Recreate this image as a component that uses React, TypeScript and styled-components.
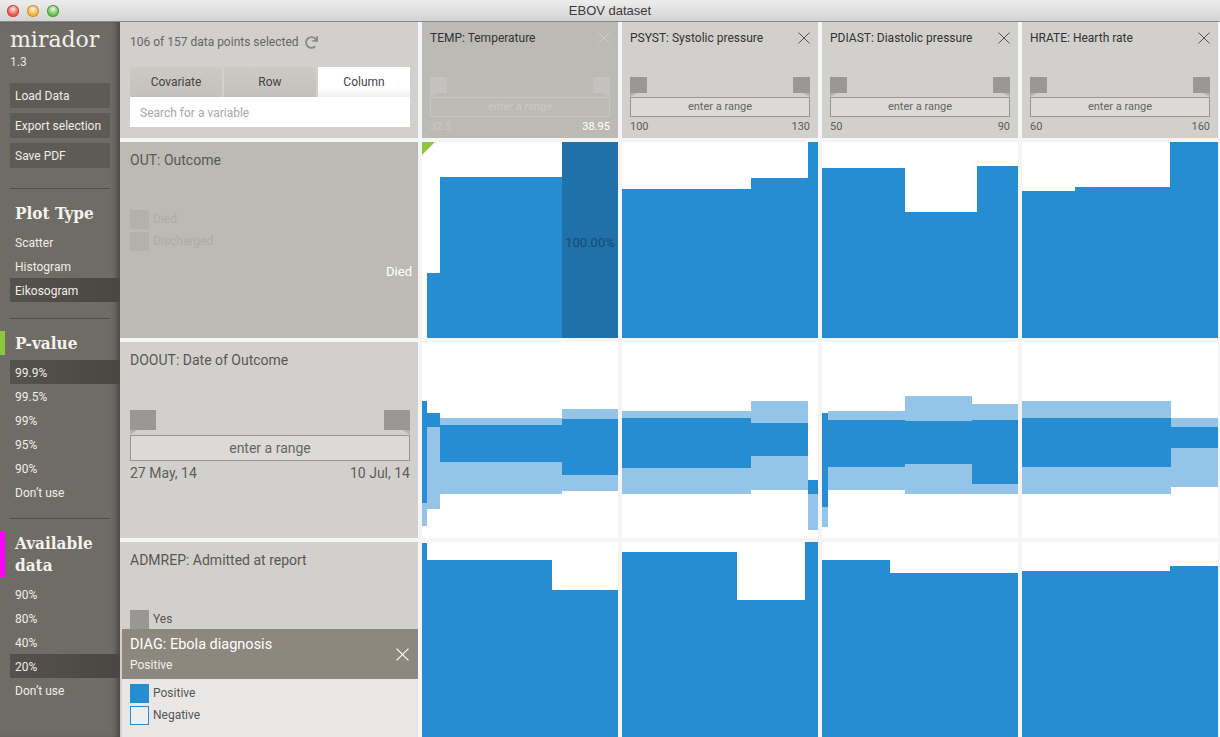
import React from 'react';
import styled, { createGlobalStyle } from 'styled-components';
import { FaRedo } from 'react-icons/fa';

const GlobalStyle = createGlobalStyle`
  html, body {
    margin: 0;
    padding: 0;
    overflow: hidden;
    background: #f5f5f5;
  }
  body {
    font-family: Roboto, "Liberation Sans", sans-serif;
  }
  * {
    box-sizing: border-box;
  }
`

const BLUE = '#278dd3'
const LIGHT = '#94c5e9'
const DARK = '#2071aa'

const Window = styled.div`
  width: 1220px;
  height: 737px;
  display: flex;
  flex-direction: column;
  overflow: hidden;
`

const TitleBar = styled.div`
  height: 22px;
  flex: none;
  display: grid;
  grid-template-columns: 1fr auto 1fr;
  align-items: center;
  background: linear-gradient(#ededed, #d3d3d3);
  border-bottom: 1px solid #8a8a8a;
  font-family: "Liberation Sans", sans-serif;
  font-size: 13px;
  color: #3a3a3a;
`

const Lights = styled.div`
  display: flex;
  gap: 8px;
  padding-left: 7px;
`

const Light = styled.span<{ $color: string; $edge: string }>`
  width: 12px;
  height: 12px;
  border-radius: 50%;
  background: radial-gradient(circle at 50% 35%, #fff8 0, ${p => p.$color} 55%);
  box-shadow: inset 0 0 0 1px ${p => p.$edge};
`

const Body = styled.div`
  flex: 1;
  display: flex;
  min-height: 0;
`

const Sidebar = styled.nav`
  width: 120px;
  flex: none;
  background: #6f6c66;
  color: #eeece8;
  padding-top: 3px;
  box-shadow: inset -6px 0 6px -3px rgba(0, 0, 0, 0.35);
`

const Logo = styled.div`
  font-family: "DejaVu Serif", "Liberation Serif", serif;
  font-size: 22px;
  line-height: 30px;
  padding-left: 10px;
  color: #f2f0ec;
`

const Version = styled.div`
  font-size: 12px;
  line-height: 14px;
  padding-left: 10px;
  color: #e6e4e0;
`

const ButtonGroup = styled.div`
  margin-top: 14px;
  display: flex;
  flex-direction: column;
  gap: 5px;
`

const MenuButton = styled.div`
  width: 100px;
  height: 25px;
  margin-left: 10px;
  padding-left: 5px;
  background: #5e5b56;
  font-size: 12px;
  line-height: 26px;
`

const Separator = styled.hr<{ $top: number; $bottom: number }>`
  width: 100px;
  margin: ${p => p.$top}px 0 ${p => p.$bottom}px 10px;
  border: none;
  border-top: 1px solid #524f4b;
  height: 0;
`

const Heading = styled.div<{ $marker?: string }>`
  font-family: "DejaVu Serif Condensed", "DejaVu Serif", "Liberation Serif", serif;
  font-weight: bold;
  font-size: 17px;
  line-height: 22px;
  padding: 1px 0 1px 10px;
  border-left: 5px solid ${p => p.$marker || 'transparent'};
  color: #f4f2ee;
`

const MenuList = styled.div<{ $top: number }>`
  margin-top: ${p => p.$top}px;
`

const MenuItem = styled.div<{ $selected?: boolean }>`
  height: 24px;
  line-height: 27px;
  margin-left: 10px;
  padding-left: 5px;
  font-size: 12px;
  overflow: hidden;
  background: ${p => (p.$selected ? 'linear-gradient(90deg, #55524d, #4a4743)' : 'transparent')};
`

const Main = styled.main`
  flex: 1;
  display: grid;
  grid-template-columns: 298px repeat(4, 196px);
  grid-template-rows: 116px repeat(3, 196px);
  gap: 4px;
  background: #f5f5f5;
  overflow: hidden;
`

const ControlPanel = styled.section`
  background: #d2d0cc;
  padding: 12px 8px 0 10px;
`

const Status = styled.div`
  display: flex;
  align-items: center;
  gap: 6px;
  font-size: 12px;
  line-height: 16px;
  color: #666;
  svg {
    color: #8a8a8a;
  }
`

const Tabs = styled.div`
  display: flex;
  gap: 2px;
  margin-top: 17px;
`

const Tab = styled.div<{ $active?: boolean }>`
  flex: 1;
  height: 30px;
  line-height: 30px;
  text-align: center;
  font-size: 12px;
  color: #444;
  background: ${p => (p.$active ? 'linear-gradient(#fff 70%, #f0f0f0)' : 'linear-gradient(#cdcac5, #c4c1bc)')};
`

const Search = styled.div`
  height: 30px;
  line-height: 32px;
  padding-left: 10px;
  background: #fff;
  font-size: 12px;
  color: #a8a8a8;
`

const ColHead = styled.section<{ $active?: boolean }>`
  background: ${p => (p.$active ? '#bcbab5' : '#d2d0cc')};
  padding: 8px 8px 0 8px;
`

const HeadRow = styled.div`
  display: flex;
  justify-content: space-between;
  align-items: center;
  height: 16px;
`

const ColTitle = styled.div`
  font-size: 12px;
  color: #333;
`

const RowHead = styled.section<{ $active?: boolean }>`
  position: relative;
  background: ${p => (p.$active ? '#bcbab5' : '#d2d0cc')};
  padding: 10px 6px 0 10px;
`

const RowTitle = styled.div`
  font-size: 14px;
  line-height: 16px;
  color: #5a5854;
`

const Legend = styled.div<{ $top: number }>`
  margin-top: ${p => p.$top}px;
  display: flex;
  flex-direction: column;
  gap: 3px;
`

const LegendItem = styled.div<{ $faded?: boolean }>`
  display: flex;
  align-items: center;
  gap: 4px;
  height: 19px;
  font-size: 12px;
  line-height: 21px;
  color: ${p => (p.$faded ? '#aeaca8' : '#555')};
`

const Swatch = styled.span<{ $fill: string; $border?: string }>`
  width: 19px;
  height: 19px;
  background: ${p => p.$fill};
  border: ${p => (p.$border ? `1px solid ${p.$border}` : 'none')};
`

const BarLabel = styled.div`
  margin-top: 13px;
  text-align: right;
  font-size: 13px;
  line-height: 16px;
  color: #fff;
`

const SliderWrap = styled.div<{ $top: number; $big?: boolean }>`
  margin-top: ${p => p.$top}px;
  padding-right: ${p => (p.$big ? 2 : 0)}px;
`

const Handles = styled.div`
  display: flex;
  justify-content: space-between;
`

const Handle = styled.span<{ $big?: boolean; $side: 'left' | 'right'; $faded?: boolean }>`
  position: relative;
  width: ${p => (p.$big ? 26 : 17)}px;
  height: ${p => (p.$big ? 20 : 16)}px;
  margin-bottom: ${p => (p.$big ? 5 : 4)}px;
  background: ${p => (p.$faded ? '#c4c2be' : '#9a9894')};
  &::after {
    content: '';
    position: absolute;
    top: 100%;
    ${p => p.$side}: 0;
    border-top: ${p => (p.$big ? 5 : 4)}px solid ${p => (p.$faded ? '#c4c2be' : '#b4b2ae')};
    ${p => (p.$side === 'left' ? 'border-right' : 'border-left')}: 7px solid transparent;
  }
`

const RangeBox = styled.div<{ $big?: boolean; $faded?: boolean }>`
  height: ${p => (p.$big ? 26 : 20)}px;
  line-height: ${p => (p.$big ? 24 : 18)}px;
  text-align: center;
  font-size: ${p => (p.$big ? 14 : 11)}px;
  color: ${p => (p.$faded ? '#cbc9c5' : '#666')};
  background: ${p => (p.$faded ? 'transparent' : '#dcdad6')};
  border: 1px solid ${p => (p.$faded ? '#c8c6c2' : '#999794')};
`

const RangeLabels = styled.div<{ $big?: boolean }>`
  display: flex;
  justify-content: space-between;
  margin-top: ${p => (p.$big ? 3 : 2)}px;
  font-size: ${p => (p.$big ? 14 : 11)}px;
  line-height: ${p => (p.$big ? 18 : 16)}px;
  color: #5f5d59;
`

const RangeValue = styled.span<{ $tone?: 'faded' | 'light' }>`
  color: ${p => (p.$tone === 'faded' ? '#c9c7c3' : p.$tone === 'light' ? '#fff' : 'inherit')};
`

const FilterPopup = styled.div`
  position: absolute;
  top: 87px;
  left: 2px;
  right: 0;
  bottom: 0;
  background: #e8e7e5;
`

const FilterHead = styled.div`
  height: 50px;
  background: #8e877d;
  color: #fff;
  padding: 7px 9px 0 8px;
  display: flex;
  justify-content: space-between;
  align-items: flex-start;
  svg {
    align-self: center;
    margin-top: -7px;
  }
`

const FilterTitle = styled.div`
  font-size: 14.5px;
  line-height: 18px;
`

const FilterSub = styled.div`
  font-size: 12px;
  line-height: 16px;
  margin-top: 3px;
  color: #f3f1ee;
`

const FilterBody = styled.div`
  padding: 5px 8px 0 8px;
  display: flex;
  flex-direction: column;
  gap: 3px;
`

const PlotCell = styled.div`
  background: #fff;
  svg {
    display: block;
  }
`

const PercentText = styled.text`
  font-family: Roboto, sans-serif;
  font-size: 13px;
  fill: #1a4a6e;
`

type Rect = [number, number, number, number, string?]

function Close({ color, size = 12 }: { color: string; size?: number }) {
  return (
    <svg width={size} height={size} viewBox="0 0 12 12">
      <path d="M0.5 0.5 L11.5 11.5 M11.5 0.5 L0.5 11.5" stroke={color} strokeWidth="1" />
    </svg>
  )
}

function Slider({ big, faded, lo, hi, top, hiTone }: { big?: boolean; faded?: boolean; lo: string; hi: string; top: number; hiTone?: 'light' }) {
  return (
    <SliderWrap $top={top} $big={big}>
      <Handles>
        <Handle $big={big} $side="left" $faded={faded} />
        <Handle $big={big} $side="right" $faded={faded} />
      </Handles>
      <RangeBox $big={big} $faded={faded}>enter a range</RangeBox>
      <RangeLabels $big={big}>
        <RangeValue $tone={faded ? 'faded' : undefined}>{lo}</RangeValue>
        <RangeValue $tone={hiTone}>{hi}</RangeValue>
      </RangeLabels>
    </SliderWrap>
  )
}

function Plot({ rects, corner, percent }: { rects: Rect[]; corner?: boolean; percent?: boolean }) {
  return (
    <PlotCell>
      <svg width="196" height="196" viewBox="0 0 196 196">
        {rects.map(([x, y, w, h, fill], i) => (
          <rect key={i} x={x} y={y} width={w} height={h} fill={fill || BLUE} />
        ))}
        {percent && <PercentText x="168" y="105" textAnchor="middle">100.00%</PercentText>}
        {corner && <polygon points="0,0 13,0 0,13" fill="#8dc63f" />}
      </svg>
    </PlotCell>
  )
}

const columns = [
  { title: 'TEMP: Temperature', lo: '32.2', hi: '38.95', active: true },
  { title: 'PSYST: Systolic pressure', lo: '100', hi: '130' },
  { title: 'PDIAST: Diastolic pressure', lo: '50', hi: '90' },
  { title: 'HRATE: Hearth rate', lo: '60', hi: '160' },
]

const outcomePlots: Rect[][] = [
  [[5, 131, 13, 65], [18, 35, 122, 161], [140, 0, 56, 196, DARK]],
  [[0, 47, 129, 149], [129, 36, 57, 160], [186, 0, 10, 196]],
  [[0, 26, 83, 170], [83, 70, 72, 126], [155, 24, 41, 172]],
  [[0, 49, 53, 147], [53, 45, 95, 151], [148, 0, 48, 196]],
]

const datePlots: Rect[][] = [
  [
    [0, 59, 5, 102], [0, 161, 5, 23, LIGHT],
    [5, 71, 13, 14], [5, 85, 13, 82, LIGHT],
    [18, 76, 122, 7, LIGHT], [18, 83, 122, 37], [18, 120, 122, 32, LIGHT],
    [140, 67, 56, 10, LIGHT], [140, 77, 56, 56], [140, 133, 56, 16, LIGHT],
  ],
  [
    [0, 69, 129, 7, LIGHT], [0, 76, 129, 50], [0, 126, 129, 26, LIGHT],
    [129, 59, 57, 22, LIGHT], [129, 81, 57, 33], [129, 114, 57, 34, LIGHT],
    [186, 138, 10, 14], [186, 152, 10, 36, LIGHT],
  ],
  [
    [0, 71, 6, 94], [0, 165, 6, 20, LIGHT],
    [6, 69, 77, 9, LIGHT], [6, 78, 77, 47], [6, 125, 77, 23, LIGHT],
    [83, 54, 67, 25, LIGHT], [83, 79, 67, 43], [83, 122, 67, 30, LIGHT],
    [150, 62, 46, 16, LIGHT], [150, 78, 46, 64], [150, 142, 46, 10, LIGHT],
  ],
  [
    [0, 59, 149, 17, LIGHT], [0, 76, 149, 49], [0, 125, 149, 27, LIGHT],
    [149, 76, 47, 9, LIGHT], [149, 85, 47, 21], [149, 106, 47, 39, LIGHT],
  ],
]

const admittedPlots: Rect[][] = [
  [[0, 1, 5, 195], [5, 18, 125, 178], [130, 48, 66, 148]],
  [[0, 10, 115, 186], [115, 58, 68, 138], [183, 0, 13, 196]],
  [[0, 18, 68, 178], [68, 31, 128, 165]],
  [[0, 29, 148, 167], [148, 24, 48, 172]],
]

function App() {
  return (
    <>
      <GlobalStyle />
      <Window>
        <TitleBar>
          <Lights>
            <Light $color="#f25a52" $edge="#c9443d" />
            <Light $color="#f6b63c" $edge="#cf8f26" />
            <Light $color="#6cc553" $edge="#4a9a37" />
          </Lights>
          <span>EBOV dataset</span>
          <span />
        </TitleBar>
        <Body>
          <Sidebar>
            <Logo>mirador</Logo>
            <Version>1.3</Version>
            <ButtonGroup>
              <MenuButton>Load Data</MenuButton>
              <MenuButton>Export selection</MenuButton>
              <MenuButton>Save PDF</MenuButton>
            </ButtonGroup>
            <Separator $top={20} $bottom={12} />
            <Heading>Plot Type</Heading>
            <MenuList $top={5}>
              <MenuItem>Scatter</MenuItem>
              <MenuItem>Histogram</MenuItem>
              <MenuItem $selected>Eikosogram</MenuItem>
            </MenuList>
            <Separator $top={16} $bottom={12} />
            <Heading $marker="#8dc63f">P-value</Heading>
            <MenuList $top={5}>
              <MenuItem $selected>99.9%</MenuItem>
              <MenuItem>99.5%</MenuItem>
              <MenuItem>99%</MenuItem>
              <MenuItem>95%</MenuItem>
              <MenuItem>90%</MenuItem>
              <MenuItem>Don’t use</MenuItem>
            </MenuList>
            <Separator $top={14} $bottom={12} />
            <Heading $marker="#ff00ff">Available<br />data</Heading>
            <MenuList $top={5}>
              <MenuItem>90%</MenuItem>
              <MenuItem>80%</MenuItem>
              <MenuItem>40%</MenuItem>
              <MenuItem $selected>20%</MenuItem>
              <MenuItem>Don’t use</MenuItem>
            </MenuList>
          </Sidebar>
          <Main>
            <ControlPanel>
              <Status>
                106 of 157 data points selected <FaRedo size={13} />
              </Status>
              <Tabs>
                <Tab>Covariate</Tab>
                <Tab>Row</Tab>
                <Tab $active>Column</Tab>
              </Tabs>
              <Search>Search for a variable</Search>
            </ControlPanel>
            {columns.map(c => (
              <ColHead key={c.title} $active={c.active}>
                <HeadRow>
                  <ColTitle>{c.title}</ColTitle>
                  <Close color={c.active ? '#cfcdc9' : '#555'} />
                </HeadRow>
                <Slider top={31} faded={c.active} lo={c.lo} hi={c.hi} hiTone={c.active ? 'light' : undefined} />
              </ColHead>
            ))}

            <RowHead $active>
              <RowTitle>OUT: Outcome</RowTitle>
              <Legend $top={42}>
                <LegendItem $faded><Swatch $fill="#b3b1ac" />Died</LegendItem>
                <LegendItem $faded><Swatch $fill="#b3b1ac" />Discharged</LegendItem>
              </Legend>
              <BarLabel>Died</BarLabel>
            </RowHead>
            {outcomePlots.map((r, i) => (
              <Plot key={i} rects={r} corner={i === 0} percent={i === 0} />
            ))}

            <RowHead>
              <RowTitle>DOOUT: Date of Outcome</RowTitle>
              <Slider big top={42} lo="27 May, 14" hi="10 Jul, 14" />
            </RowHead>
            {datePlots.map((r, i) => (
              <Plot key={i} rects={r} />
            ))}

            <RowHead>
              <RowTitle>ADMREP: Admitted at report</RowTitle>
              <Legend $top={42}>
                <LegendItem><Swatch $fill="#999794" />Yes</LegendItem>
              </Legend>
              <FilterPopup>
                <FilterHead>
                  <div>
                    <FilterTitle>DIAG: Ebola diagnosis</FilterTitle>
                    <FilterSub>Positive</FilterSub>
                  </div>
                  <Close color="#fff" size={13} />
                </FilterHead>
                <FilterBody>
                  <LegendItem><Swatch $fill={BLUE} />Positive</LegendItem>
                  <LegendItem><Swatch $fill="#eeeeee" $border={BLUE} />Negative</LegendItem>
                </FilterBody>
              </FilterPopup>
            </RowHead>
            {admittedPlots.map((r, i) => (
              <Plot key={i} rects={r} />
            ))}
          </Main>
        </Body>
      </Window>
    </>
  )
}

export default App
